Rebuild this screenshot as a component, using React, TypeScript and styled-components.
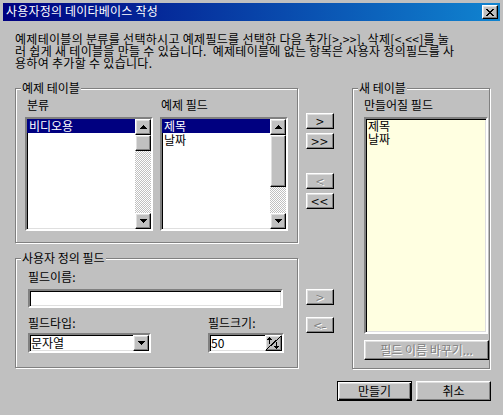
import React from "react";
import styled, { createGlobalStyle, css } from "styled-components";

const FONT = `"Noto Sans CJK KR", "Noto Sans", sans-serif`;

const Global = createGlobalStyle`
  html, body { margin: 0; padding: 0; background: #c0c0c0; }
  body { font-family: ${FONT}; font-size: 12px; color: #000; }
  * { box-sizing: border-box; }
`;

const raised = css`
  background: #c0c0c0;
  border: 1px solid;
  border-color: #fff #000 #000 #fff;
  box-shadow: inset -1px -1px #808080, inset 1px 1px #dfdfdf;
`;

const sunken = css`
  border: 2px solid;
  border-color: #808080 #fff #fff #808080;
  box-shadow: inset 1px 1px #000, inset -1px -1px #dfdfdf;
`;

const Window = styled.div`
  width: 503px;
  height: 415px;
  background: #c0c0c0;
  padding: 3px 3px 0 3px;
  display: flex;
  flex-direction: column;
  overflow: hidden;
`;

const TitleBar = styled.div`
  height: 18px;
  background: linear-gradient(to right, #000080, #1084d0);
  display: flex;
  align-items: center;
  justify-content: space-between;
  padding: 0 2px 0 3px;
`;

const TitleText = styled.span`
  color: #fff;
  font-size: 12px;
  line-height: 12px;
  margin-top: -2px;
  letter-spacing: 0.2px;
  white-space: nowrap;
`;

const CloseBtn = styled.span`
  ${raised}
  width: 16px;
  height: 14px;
  display: flex;
  align-items: center;
  justify-content: center;
`;

const Description = styled.div<{ $ls: number }>`
  margin: 12px 0 0 12px;
  line-height: 12px;
  font-size: 12px;
  white-space: pre;
  letter-spacing: ${(p) => p.$ls}px;
`;

const Main = styled.div`
  display: flex;
  margin: 19px 0 0 12px;
`;

const LeftCol = styled.div`
  width: 283px;
  display: flex;
  flex-direction: column;
  gap: 15px;
`;

const Group = styled.div<{ $h: number; $pad: string }>`
  position: relative;
  height: ${(p) => p.$h}px;
  border: 1px solid #808080;
  box-shadow: inset 1px 1px #fff, 1px 1px #fff;
  padding: ${(p) => p.$pad};
`;

const Legend = styled.span`
  position: absolute;
  top: -7px;
  left: 5px;
  padding: 0 1px;
  background: #c0c0c0;
  line-height: 12px;
  white-space: nowrap;
`;

const Columns = styled.div`
  display: flex;
  gap: 7px;
`;

const FieldCol = styled.div<{ $w?: number }>`
  display: flex;
  flex-direction: column;
  ${(p) => p.$w && `width: ${p.$w}px;`}
`;

const Label = styled.div<{ $mb: number; $ml?: number }>`
  line-height: 12px;
  margin-bottom: ${(p) => p.$mb}px;
  margin-left: ${(p) => p.$ml ?? 0}px;
  white-space: nowrap;
`;

const ListBox = styled.div<{ $w: number; $h: number; $bg?: string }>`
  ${sunken}
  width: ${(p) => p.$w}px;
  height: ${(p) => p.$h}px;
  background: ${(p) => p.$bg ?? "#fff"};
  display: flex;
`;

const Items = styled.div`
  flex: 1;
  display: flex;
  flex-direction: column;
  min-width: 0;
`;

const Item = styled.div<{ $sel?: boolean; $h: number }>`
  height: ${(p) => p.$h}px;
  line-height: ${(p) => p.$h}px;
  padding-left: 2px;
  white-space: nowrap;
  background: ${(p) => (p.$sel ? "#000080" : "transparent")};
  color: ${(p) => (p.$sel ? "#fff" : "#000")};
`;

const ScrollBar = styled.div`
  width: 16px;
  display: flex;
  flex-direction: column;
`;

const ScrollBtn = styled.div`
  ${raised}
  width: 16px;
  height: 16px;
  display: flex;
  align-items: center;
  justify-content: center;
`;

const Thumb = styled.div<{ $h: number }>`
  ${raised}
  width: 16px;
  height: ${(p) => p.$h}px;
`;

const Track = styled.div`
  flex: 1;
  background: repeating-conic-gradient(#c0c0c0 0% 25%, #fff 0% 50%) 0 0 / 2px 2px;
`;

const MidCol = styled.div`
  width: 28px;
  margin-left: 8px;
  display: flex;
  flex-direction: column;
  padding-top: 25px;
`;

const BtnStack = styled.div<{ $mt: number; $gap: number }>`
  display: flex;
  flex-direction: column;
  gap: ${(p) => p.$gap}px;
  margin-top: ${(p) => p.$mt}px;
`;

const PushButton = styled.button<{
  $w: number;
  $h: number;
  $default?: boolean;
  $ls?: number;
  $fs?: number;
}>`
  ${raised}
  width: ${(p) => p.$w}px;
  height: ${(p) => p.$h}px;
  padding: 0;
  margin: 0;
  font-family: ${FONT};
  font-size: ${(p) => p.$fs ?? 12}px;
  line-height: 12px;
  color: #000;
  letter-spacing: ${(p) => p.$ls ?? 0}px;
  display: flex;
  align-items: center;
  justify-content: center;
  white-space: nowrap;
  &:disabled {
    color: #808080;
    text-shadow: 1px 1px 0 #fff;
  }
  ${(p) =>
    p.$default &&
    css`
      border-color: #000;
      box-shadow: inset 1px 1px #fff, inset -1px -1px #000, inset -2px -2px #808080,
        inset 2px 2px #dfdfdf;
    `}
`;

const RightCol = styled.div`
  width: 148px;
  margin-left: 8px;
  display: flex;
  flex-direction: column;
  align-items: flex-end;
`;

const RenameWrap = styled.div`
  margin-top: 6px;
`;

const Footer = styled.div`
  display: flex;
  gap: 4px;
  margin-top: 12px;
  margin-right: -1px;
`;

const Row = styled.div`
  display: flex;
  justify-content: space-between;
  margin-top: 9px;
`;

const Field = styled.div<{ $w: number; $h: number }>`
  ${sunken}
  width: ${(p) => p.$w}px;
  height: ${(p) => p.$h}px;
  background: #fff;
  display: flex;
  align-items: stretch;
`;

const FieldText = styled.span`
  flex: 1;
  line-height: 15px;
  padding-left: 1px;
  white-space: nowrap;
`;

const DropBtn = styled.span<{ $w: number }>`
  ${raised}
  width: ${(p) => p.$w}px;
  height: 16px;
  display: flex;
  align-items: center;
  justify-content: center;
`;

const DownTri = () => (
  <svg width="7" height="4" viewBox="0 0 7 4" shapeRendering="crispEdges">
    <path d="M0 0h7v1h-1v1h-1v1h-1v1h-1v-1h-1v-1h-1v-1h-1z" fill="#000" />
  </svg>
);
const UpTri = () => (
  <svg width="7" height="4" viewBox="0 0 7 4" shapeRendering="crispEdges">
    <path d="M3 0h1v1h1v1h1v1h1v1h-7v-1h1v-1h1v-1h1z" fill="#000" />
  </svg>
);

const CloseX = () => (
  <svg width="8" height="7" viewBox="0 0 8 7" shapeRendering="crispEdges">
    <path
      d="M0 0h2v1h1v1h2v-1h1v-1h2v1h-1v1h-1v1h-1v1h1v1h1v1h1v1h-2v-1h-1v-1h-2v1h-1v1h-2v-1h1v-1h1v-1h1v-1h-1v-1h-1v-1h-1z"
      fill="#000"
    />
  </svg>
);

const SpinGlyph = () => (
  <svg width="15" height="14" viewBox="0 0 15 14" shapeRendering="crispEdges">
    <path d="M0 14L15 0" stroke="#000" strokeWidth="1" />
    <path d="M3 1h1v1h1v1h1v1h-2v4h-1v-4h-2v-1h1v-1h1z" fill="#000" />
    <path d="M10 6h1v4h2v1h-1v1h-1v1h-1v-1h-1v-1h-1v-1h2z" fill="#000" />
  </svg>
);

type ListProps = {
  items: string[];
  selected?: number;
  thumb: number;
};

const ScrollList = ({ items, selected, thumb }: ListProps) => (
  <ListBox $w={128} $h={114}>
    <Items>
      {items.map((t, i) => (
        <Item key={t} $h={14} $sel={i === selected}>
          {t}
        </Item>
      ))}
    </Items>
    <ScrollBar>
      <ScrollBtn>
        <UpTri />
      </ScrollBtn>
      <Thumb $h={thumb} />
      <Track />
      <ScrollBtn>
        <DownTri />
      </ScrollBtn>
    </ScrollBar>
  </ListBox>
);

const DESC = [
  "예제테이블의 분류를 선택하시고 예제필드를 선택한 다음 추가[>,>>], 삭제[<,<<]를 눌",
  "러 쉽게 새 테이블을 만들 수 있습니다.  예제테이블에 없는 항목은 사용자 정의필드를 사",
  "용하여 추가할 수 있습니다.",
];

export default function App() {
  return (
    <>
      <Global />
      <Window>
        <TitleBar>
          <TitleText>사용자정의 데이타베이스 작성</TitleText>
          <CloseBtn>
            <CloseX />
          </CloseBtn>
        </TitleBar>

        <Description $ls={0.3}>{DESC.join("\n")}</Description>

        <Main>
          <LeftCol>
            <Group $h={155} $pad="10px 8px 0 9px">
              <Legend>예제 테이블</Legend>
              <Columns>
                <FieldCol>
                  <Label $mb={6} $ml={2}>분류</Label>
                  <ScrollList items={["비디오용"]} selected={0} thumb={16} />
                </FieldCol>
                <FieldCol>
                  <Label $mb={6} $ml={1}>예제 필드</Label>
                  <ScrollList items={["제목", "날짜"]} selected={0} thumb={52} />
                </FieldCol>
              </Columns>
            </Group>

            <Group $h={110} $pad="12px 13px 0 12px">
              <Legend>사용자 정의 필드</Legend>
              <Label $mb={6}>필드이름:</Label>
              <Field $w={255} $h={19} />
              <Row>
                <FieldCol $w={123}>
                  <Label $mb={4}>필드타입:</Label>
                  <Field $w={123} $h={20}>
                    <FieldText>문자열</FieldText>
                    <DropBtn $w={16}>
                      <DownTri />
                    </DropBtn>
                  </Field>
                </FieldCol>
                <FieldCol $w={76}>
                  <Label $mb={4}>필드크기:</Label>
                  <Field $w={76} $h={20}>
                    <FieldText>50</FieldText>
                    <DropBtn $w={17}>
                      <SpinGlyph />
                    </DropBtn>
                  </Field>
                </FieldCol>
              </Row>
            </Group>
          </LeftCol>

          <MidCol>
            <BtnStack $mt={0} $gap={4}>
              <PushButton $w={28} $h={16} $fs={14}>&gt;</PushButton>
              <PushButton $w={28} $h={16} $fs={14} $ls={1}>&gt;&gt;</PushButton>
            </BtnStack>
            <BtnStack $mt={24} $gap={4}>
              <PushButton $w={28} $h={16} $fs={14} disabled>&lt;</PushButton>
              <PushButton $w={28} $h={16} $fs={14} $ls={1}>&lt;&lt;</PushButton>
            </BtnStack>
            <BtnStack $mt={80} $gap={12}>
              <PushButton $w={28} $h={16} $fs={14} disabled>&gt;</PushButton>
              <PushButton $w={28} $h={16} $fs={14} disabled>&lt;-</PushButton>
            </BtnStack>
          </MidCol>

          <RightCol>
            <Group $h={281} $pad="10px 0 0 11px">
              <Legend>새 테이블</Legend>
              <Label $mb={6}>만들어질 필드</Label>
              <ListBox $w={124} $h={217} $bg="#ffffe1">
                <Items>
                  <Item $h={13}>제목</Item>
                  <Item $h={13}>날짜</Item>
                </Items>
              </ListBox>
              <RenameWrap>
                <PushButton $w={125} $h={20} disabled>
                  필드 이름 바꾸기...
                </PushButton>
              </RenameWrap>
            </Group>
            <Footer>
              <PushButton $w={75} $h={20} $default>
                만들기
              </PushButton>
              <PushButton $w={75} $h={20}>
                취소
              </PushButton>
            </Footer>
          </RightCol>
        </Main>
      </Window>
    </>
  );
}
